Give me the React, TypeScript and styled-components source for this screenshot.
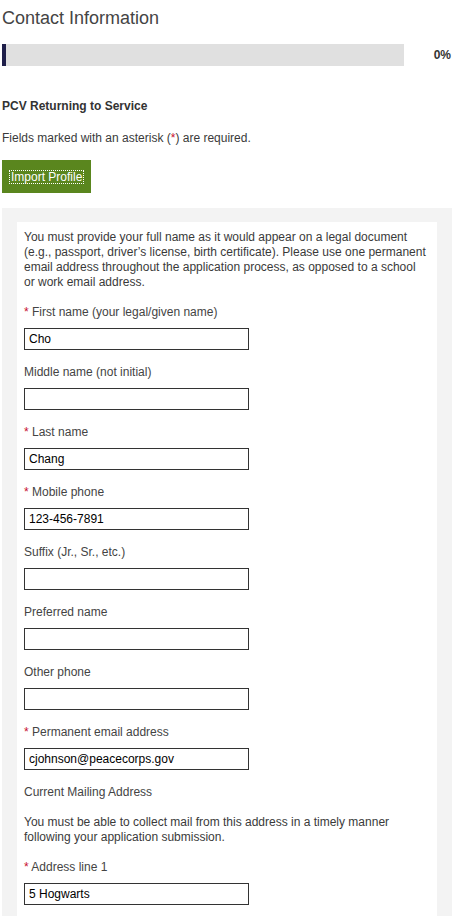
import React, { FC } from 'react';
import styled, { createGlobalStyle } from 'styled-components';

const GlobalStyle = createGlobalStyle`
  body {
    margin: 0;
    background: #fff;
    font-family: "Liberation Sans", Arial, sans-serif;
    font-size: 12px;
    color: #3a3a3a;
  }
`;

const Page = styled.div`
  width: 450px;
  padding: 0 2px;
`;

const Title = styled.h1`
  margin: 0;
  padding-top: 7px;
  font-size: 18px;
  font-weight: normal;
  line-height: 22px;
  color: #444;
`;

const ProgressRow = styled.div`
  display: flex;
  align-items: center;
  margin-top: 15px;
  height: 22px;
`;

const ProgressTrack = styled.div`
  width: 402px;
  height: 22px;
  background: #e0e0e0;
`;

const ProgressFill = styled.div`
  height: 100%;
  background: #1f1f4a;
`;

const ProgressValue = styled.span`
  flex: 1;
  text-align: right;
  padding-right: 1px;
  font-weight: bold;
  color: #333;
`;

const SectionTitle = styled.h2`
  margin: 33px 0 0;
  font-size: 12px;
  line-height: 15px;
  font-weight: bold;
  color: #333;
`;

const Note = styled.p`
  margin: 17px 0 0;
  line-height: 15px;
`;

const Required = styled.span`
  color: #c8102e;
`;

const ImportButton = styled.button`
  display: flex;
  align-items: center;
  margin-top: 14px;
  height: 33px;
  width: 89px;
  padding: 0 7px;
  border: none;
  background: #5a861e;
  color: #fff;
  font-family: inherit;
  font-size: 12px;
  cursor: pointer;
`;

const FocusRing = styled.span`
  display: block;
  border: 1px dotted #fff;
  line-height: 12px;
  padding: 0 1px;
  white-space: nowrap;
`;

const Panel = styled.div`
  margin-top: 15px;
  background: #f3f3f3;
  padding: 14px 15px 0;
`;

const Card = styled.div`
  background: #fff;
  padding: 8px 10px 30px 7px;
`;

const Text = styled.p`
  margin: 0 0 15px;
  line-height: 15px;
`;

const Field = styled.div`
  margin-bottom: 15px;
`;

const Label = styled.label`
  display: block;
  line-height: 15px;
  margin-bottom: 8px;
  color: #444;
`;

const Input = styled.input`
  display: block;
  box-sizing: border-box;
  width: 225px;
  height: 22px;
  margin: 0;
  padding: 0 4px;
  border: 1px solid #333;
  font-family: inherit;
  font-size: 12px;
  color: #000;
  background: #fff;
`;

const SubHeading = styled.div`
  line-height: 15px;
  margin-bottom: 15px;
  color: #444;
`;

interface FormFieldProps {
  id: string;
  label: string;
  required?: boolean;
  value?: string;
}

const FormField: FC<FormFieldProps> = ({ id, label, required, value }) => (
  <Field>
    <Label htmlFor={id}>
      {required && <Required>* </Required>}
      {label}
    </Label>
    <Input id={id} defaultValue={value ?? ''} />
  </Field>
);

const progress = 1;

const App: FC = () => (
  <>
    <GlobalStyle />
    <Page>
      <Title>Contact Information</Title>
      <ProgressRow>
        <ProgressTrack>
          <ProgressFill style={{ width: `${progress}%` }} />
        </ProgressTrack>
        <ProgressValue>0%</ProgressValue>
      </ProgressRow>
      <SectionTitle>PCV Returning to Service</SectionTitle>
      <Note>
        Fields marked with an asterisk (<Required>*</Required>) are required.
      </Note>
      <ImportButton type="button">
        <FocusRing>Import Profile</FocusRing>
      </ImportButton>
      <Panel>
        <Card>
          <Text>
            You must provide your full name as it would appear on a legal
            document (e.g., passport, driver’s license, birth certificate).
            Please use one permanent email address throughout the application
            process, as opposed to a school or work email address.
          </Text>
          <FormField id="firstName" label="First name (your legal/given name)" required value="Cho" />
          <FormField id="middleName" label="Middle name (not initial)" />
          <FormField id="lastName" label="Last name" required value="Chang" />
          <FormField id="mobilePhone" label="Mobile phone" required value="123-456-7891" />
          <FormField id="suffix" label="Suffix (Jr., Sr., etc.)" />
          <FormField id="preferredName" label="Preferred name" />
          <FormField id="otherPhone" label="Other phone" />
          <FormField id="email" label="Permanent email address" required value="cjohnson@peacecorps.gov" />
          <SubHeading>Current Mailing Address</SubHeading>
          <Text>
            You must be able to collect mail from this address in a timely
            manner following your application submission.
          </Text>
          <FormField id="address1" label="Address line 1" required value="5 Hogwarts" />
        </Card>
      </Panel>
    </Page>
  </>
);

export default App;
